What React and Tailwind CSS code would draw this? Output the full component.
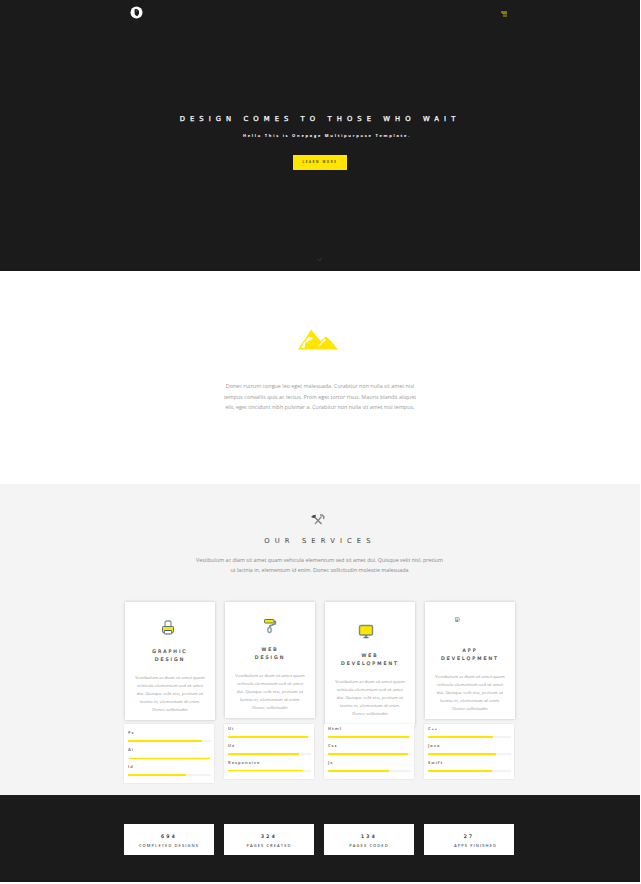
import React from "react";

const PARA = [
  "Vestibulum ac diam sit amet quam",
  "vehicula elementum sed sit amet",
  "dui. Quisque velit nisi, pretium ut",
  "lacinia in, elementum id enim.",
  "Donec sollicitudin",
];

const PrinterIcon = () => (
  <svg width="14" height="15" viewBox="0 0 14 15" fill="none">
    <path d="M4 6V2.300L5.300 1H9l1 1.300V6" fill="#fff" stroke="#83979c" strokeWidth="1.300" />
    <rect x="1.500" y="6.500" width="11" height="6" rx="0.800" fill="#ffe500" stroke="#5c7668" strokeWidth="1" />
    <rect x="3.200" y="10.500" width="7.600" height="3.500" rx="0.700" fill="#fff" stroke="#456169" strokeWidth="1" />
  </svg>
);

const RollerIcon = () => (
  <svg width="14" height="16" viewBox="0 0 14 16" fill="none">
    <path d="M11 3.500h1.300v2.200L6.800 8v2" stroke="#718a91" strokeWidth="1.700" />
    <ellipse cx="6.500" cy="12" rx="1.700" ry="2.500" stroke="#8fa1a7" strokeWidth="1.500" />
    <rect x="1.500" y="1.500" width="9.500" height="3.500" rx="0.700" fill="#ffe500" stroke="#5c7668" strokeWidth="1" />
  </svg>
);

const MonitorIcon = () => (
  <svg width="16" height="15" viewBox="0 0 16 15" fill="none">
    <rect x="1.500" y="1.500" width="13" height="9.500" rx="1.300" fill="#ffe500" stroke="#789078" strokeWidth="1.400" />
    <path d="M8 11v2.500M5.500 13.500h5" stroke="#5c7880" strokeWidth="1.500" />
  </svg>
);

const BrokenImage = () => (
  <svg width="5" height="5" viewBox="0 0 5 5">
    <path d="M.4.400h2.800l1.300 1.300v2.900H.4z" fill="#cfdcf0" stroke="#8d9296" strokeWidth=".7" />
    <path d="M.7 4.500 2.300 2.500l1.200 2z" fill="#55a44a" />
    <path d="m3 4.700 1.700-1.900v1.900z" fill="#fff" />
  </svg>
);

const SERVICES = [
  { title: ["GRAPHIC", "DESIGN"], icon: <PrinterIcon />, box: "h-[118px]", iconBox: "h-[46px] pt-[18px] pr-[4px]" },
  { title: ["WEB", "DESIGN"], icon: <RollerIcon />, box: "h-[116px]", iconBox: "h-[44px] pt-[16px] pr-[1px]" },
  { title: ["WEB", "DEVELOPMENT"], icon: <MonitorIcon />, box: "h-[124px]", iconBox: "h-[50px] pt-[22px] pr-[8px]" },
  { title: ["APP", "DEVELOPMENT"], icon: <BrokenImage />, box: "h-[117px]", iconBox: "h-[45px] pt-[15px] pr-[25px]" },
];

const SKILLS = [
  {
    box: "h-[59px] pt-[6px]",
    rows: [
      { name: "Ps", bar: "w-[74px] h-[2px]" },
      { name: "Ai", bar: "w-[81px] h-px ml-px self-end" },
      { name: "Id", bar: "w-[58px] h-[2px]" },
    ],
  },
  {
    box: "h-[55px] pt-[2px]",
    rows: [
      { name: "Ui", bar: "w-[80px] h-[2px]" },
      { name: "Ux", bar: "w-[71px] h-[2px]" },
      { name: "Responsive", bar: "w-[75px] h-px" },
    ],
  },
  {
    box: "h-[55px] pt-[2px]",
    rows: [
      { name: "Html", bar: "w-[81px] h-[2px]" },
      { name: "Css", bar: "w-[80px] h-[2px]" },
      { name: "Js", bar: "w-[61px] h-[2px]" },
    ],
  },
  {
    box: "h-[55px] pt-[2px]",
    rows: [
      { name: "C++", bar: "w-[65px] h-[2px]" },
      { name: "Java", bar: "w-[68px] h-[2px]" },
      { name: "Swift", bar: "w-[64px] h-[2px]" },
    ],
  },
];

const STATS = [
  { value: "694", label: "COMPLETED DESIGNS", pad: "" },
  { value: "324", label: "PAGES CREATED", pad: "" },
  { value: "134", label: "PAGES CODED", pad: "" },
  { value: "27", label: "APPS FINISHED", pad: "pl-[13px]" },
];

function Hero() {
  return (
    <header className="flex h-[271px] flex-col items-center bg-[#1b1b1b]">
      <div className="flex h-[26px] w-[390px] items-start justify-between pt-[6px] pr-[8px] pl-[5px]">
        <svg width="13" height="13" viewBox="0 0 13 13">
          <circle cx="6.500" cy="6.500" r="6" fill="#fff" />
          <path d="M4.500 3.500 6 2.800l1.500.7L9 5v3L7.500 10 6 9.800 4.700 8z" fill="#1b1b1b" />
          <path d="M6 4.200 7 6" stroke="#999" strokeWidth=".5" />
        </svg>
        <svg className="mt-[5px]" width="6" height="6" viewBox="0 0 6 6">
          <path d="M0 0h6v2H0z" fill="#7e7209" />
          <path d="M1 2h5v1H1z" fill="#958609" />
          <path d="M2 3h4v1H2z" fill="#4d4612" />
          <path d="M2 4h4v2H2z" fill="#6b610d" />
        </svg>
      </div>
      <h1 className="mt-[87px] h-[12px] font-['DejaVu_Sans',sans-serif] text-[6.800px] leading-[12px] tracking-[5.070px] whitespace-nowrap text-white [-webkit-text-stroke:0.25px_#fff]">
        DESIGN COMES TO THOSE WHO WAIT
      </h1>
      <p className="mt-[6px] ml-[14px] h-[9px] text-[4px] leading-[9px] font-bold tracking-[1.740px] whitespace-nowrap text-white">
        Hello This is Onepage Multipurpose Template.
      </p>
      <a className="mt-[15px] flex h-[15px] w-[54px] items-center justify-center bg-[#ffe500] text-[3px] font-bold tracking-[1.560px] whitespace-nowrap text-[#55501a]">
        LEARN MORE
      </a>
      <svg className="mt-[88px] mr-[2px]" width="5" height="4" viewBox="0 0 5 4">
        <path d="m.5.500 2 2.300 2-2.300" fill="none" stroke="#444" strokeWidth=".8" />
      </svg>
    </header>
  );
}

function About() {
  return (
    <section className="flex h-[213px] flex-col items-center bg-white text-[5.380px] leading-[10.500px] text-[#999]">
      <svg className="mt-[58px] mr-[4px] h-[21px] w-[40px] shrink-0" viewBox="0 0 40 21">
        <path d="M.5 20.500 2 17 7.500 9.500 10.500 5 13 .5 17.500 6l5 6 5.500-4.500L33 12l7 8.500z" fill="#ffe500" />
        <path d="m3 19 2.500-5 3-3 1.500-3h3.500l1.500 1-2 2-2 .5-1.500 2-2-.5-.5 2.500L6.500 19z" fill="#fff" />
        <path d="m20 18 3-4.500 2.500-2.500 1-1.500 1.500 1.500-1.500 1.500-2 1-1.500 2z" fill="#fff" />
      </svg>
      <div className="mt-[31px] flex flex-col items-center">
        <span className="whitespace-nowrap">Donec rutrum congue leo eget malesuada. Curabitur non nulla sit amet nisl</span>
        <span className="whitespace-nowrap">tempus convallis quis ac lectus. Proin eget tortor risus. Mauris blandit aliquet</span>
        <span className="whitespace-nowrap">elit, eget tincidunt nibh pulvinar a. Curabitur non nulla sit amet nisl tempus.</span>
      </div>
    </section>
  );
}

function ServiceCard({ service }) {
  return (
    <article
      className={"flex w-[90px] flex-col items-center bg-white shadow-[0_0_3px_rgba(0,0,0,0.2)] " + service.box}
    >
      <div className={"flex shrink-0 justify-center " + service.iconBox}>{service.icon}</div>
      <h3 className="flex flex-col items-center font-['DejaVu_Sans',sans-serif] text-[4.800px] leading-[8px] tracking-[2px] text-[#333] [-webkit-text-stroke:0.15px_#333]">
        {service.title.map((t) => (
          <span key={t}>{t}</span>
        ))}
      </h3>
      <p className="mt-[9px] flex flex-col items-center text-[4.300px] leading-[8px] text-[#999]">
        {PARA.map((t) => (
          <span className="whitespace-nowrap" key={t}>{t}</span>
        ))}
      </p>
    </article>
  );
}

function SkillBox({ skill }) {
  return (
    <div className={"relative w-[90px] bg-white px-[4px] shadow-[0_0_2px_rgba(0,0,0,0.1)] " + skill.box}>
      {skill.rows.map((r) => (
        <div className="h-[17px]" key={r.name}>
          <div className="h-[10px] text-[4px] leading-[6px] font-bold tracking-[1px] text-[#777]">{r.name}</div>
          <div className="flex h-[2px] w-[83px] items-start bg-[#f3f3f3] shadow-[0_0_1px_#f3f3f3]">
            <div className={"bg-[#ffe500] " + r.bar} />
          </div>
        </div>
      ))}
    </div>
  );
}

function Services() {
  return (
    <section className="flex h-[311px] flex-col items-center bg-[#f4f4f4]">
      <svg className="mt-[30px] mr-[4px] h-[11px] w-[14px] shrink-0" viewBox="0 0 14 11" fill="none">
        <path d="m3.500 3 7 7" stroke="#777" strokeWidth="1.200" />
        <path d="M10.500 2.500 4 10" stroke="#888" strokeWidth="1.200" />
        <path d="M0 3 2 1.200 5 .7 4.500 3 3 4.300z" fill="#4c4c4c" />
        <path d="m9 1 2.500.2L13 3l-.5 2" stroke="#888" strokeWidth="1.400" />
      </svg>
      <h2 className="mt-[10px] h-[12px] font-['DejaVu_Sans',sans-serif] text-[6.800px] leading-[12px] tracking-[5.100px] whitespace-nowrap text-[#444]">
        OUR SERVICES
      </h2>
      <div className="mt-[8px] mr-[1px] flex h-[20px] flex-col items-center text-[5.350px] leading-[10px] text-[#888]">
        <span className="whitespace-nowrap">Vestibulum ac diam sit amet quam vehicula elementum sed sit amet dui. Quisque velit nisl, pretium</span>
        <span className="whitespace-nowrap">ut lacinia in, elementum id enim. Donec sollicitudin molestie malesuada</span>
      </div>
      <div className="mt-[27px] flex h-[122px] items-start gap-[10px]">
        {SERVICES.map((s, i) => (
          <ServiceCard key={i} service={s} />
        ))}
      </div>
      <div className="mr-[2px] flex items-start gap-[10px]">
        {SKILLS.map((s, i) => (
          <SkillBox key={i} skill={s} />
        ))}
      </div>
    </section>
  );
}

function Stats() {
  return (
    <section className="flex h-[87px] justify-center gap-[10px] bg-[#1b1b1b] pt-[29px] pr-[2px]">
      {STATS.map((s) => (
        <div className="flex h-[31px] w-[90px] flex-col items-center bg-white pt-[8px]" key={s.label}>
          <div className="font-['DejaVu_Sans',sans-serif] text-[4.800px] leading-[9px] tracking-[2.300px] text-[#222] [-webkit-text-stroke:0.15px_#222]">{s.value}</div>
          <div className={"text-[4px] leading-[9px] font-semibold tracking-[1.100px] whitespace-nowrap text-[#555] " + s.pad}>
            {s.label}
          </div>
        </div>
      ))}
    </section>
  );
}

export default function App() {
  return (
    <main className="w-[640px] overflow-hidden bg-white font-['Open_Sans',sans-serif]">
      <Hero />
      <About />
      <Services />
      <Stats />
    </main>
  );
}
